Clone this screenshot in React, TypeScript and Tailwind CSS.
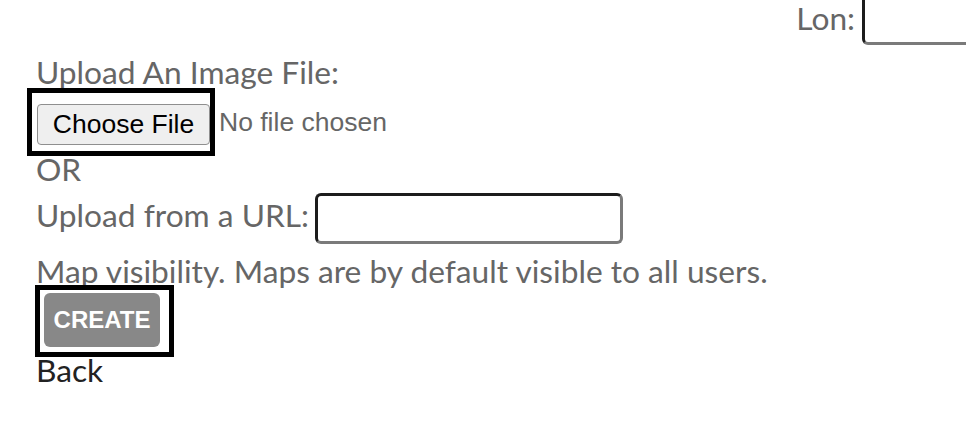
export default function App() {
  return (
    <div className="w-[966px] h-[428px] overflow-hidden bg-white font-['Lato',sans-serif] text-[31.7px] leading-[38px] text-[#666]">
      {/* Coordinates row */}
      <div className="flex items-end justify-end mt-[-6px] mr-[-204px]">
        <span className="mb-[8px] mr-[7px]">Lon:</span>
        <input
          type="text"
          className="w-[308px] h-[51px] rounded-[6px] border-[3px] border-t-[#1c1c1c] border-l-[#1c1c1c] border-b-[#7a7a7a] border-r-[#7a7a7a] bg-white"
        />
      </div>

      <div className="pl-[36px]">
        <div className="mt-[8px]">Upload An Image File:</div>

        {/* File picker */}
        <div className="flex items-center mt-[2px] h-[58px]">
          <div className="ml-[-4px] h-[58px] w-[178px] pl-[5px] pt-[9px] outline-[5px] outline-black outline-solid">
            <button className="w-[173px] h-[41px] rounded-[4px] border border-[#8f8f8f] bg-[#efefef] font-['Liberation_Sans',Arial,sans-serif] text-[26.5px] leading-none text-black">
              Choose File
            </button>
          </div>
          <span className="ml-[9px] mt-[1px] font-['Liberation_Sans',Arial,sans-serif] text-[26.5px] leading-none text-[#666]">
            No file chosen
          </span>
        </div>

        <div className="mt-[-1px]">OR</div>

        {/* URL */}
        <div className="flex items-start">
          <span className="mt-[8px]">Upload from a URL:</span>
          <input
            type="text"
            className="ml-[6px] mt-[5px] w-[308px] h-[51px] rounded-[6px] border-[3px] border-t-[#1c1c1c] border-l-[#1c1c1c] border-b-[#7a7a7a] border-r-[#7a7a7a] bg-white"
          />
        </div>

        <div className="mt-[8px]">Map visibility. Maps are by default visible to all users.</div>

        {/* Create */}
        <div className="mt-0 ml-[4px] w-[129px] h-[62px] pl-[4px] pt-[3px] outline-[5px] outline-black outline-solid">
          <button className="w-[116px] h-[54px] rounded-[6px] bg-[#888] font-['Liberation_Sans',Arial,sans-serif] text-[24px] font-bold leading-none text-white">
            CREATE
          </button>
        </div>

        <div className="mt-[-1px] text-[#222]">Back</div>
      </div>
    </div>
  );
}
